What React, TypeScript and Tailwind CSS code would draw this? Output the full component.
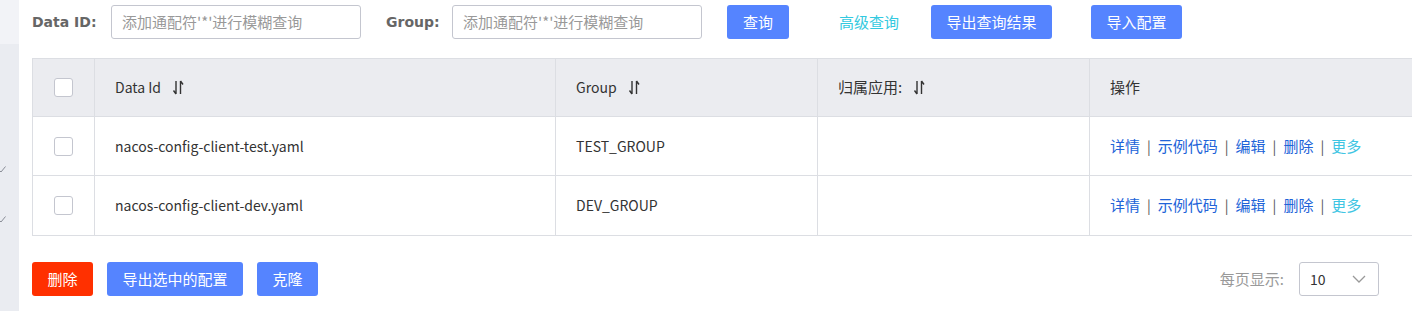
import React from "react";

const font = { fontFamily: '"Noto Sans CJK SC", "Liberation Sans", sans-serif' };
const labelFont = { fontFamily: '"DejaVu Sans", sans-serif' };

function SortIcon() {
  return (
    <svg width="12" height="15" viewBox="0 0 12 15" className="ml-[11px] inline-block" fill="none" stroke="#333" strokeWidth="1.4">
      <path d="M4 1v13M4 14L1.5 10.5" />
      <path d="M8.5 14V1M8.5 1L11 4.5" />
    </svg>
  );
}

function Check() {
  return (
    <svg width="8" height="7" viewBox="0 0 8 7" fill="none" stroke="#8a8d96" strokeWidth="1">
      <path d="M0.5 3.5L3 6L7.5 0.5" />
    </svg>
  );
}

function Checkbox() {
  return <div className="w-[19px] h-[19px] rounded-[3px] border border-[#c4c6cf] bg-white" />;
}

const rows = [
  { id: "nacos-config-client-test.yaml", group: "TEST_GROUP" },
  { id: "nacos-config-client-dev.yaml", group: "DEV_GROUP" },
];

function Actions() {
  const links = ["详情", "示例代码", "编辑", "删除"];
  return (
    <div className="flex items-center text-[15px]">
      {links.map((l) => (
        <React.Fragment key={l}>
          <a href="#" className="text-[#2163d8]">{l}</a>
          <span className="mx-[7px] text-[14px] text-[#555]">|</span>
        </React.Fragment>
      ))}
      <a href="#" className="text-[#3fc5e3]">更多</a>
    </div>
  );
}

export default function App() {
  return (
    <div className="flex w-[1412px] h-[311px] overflow-hidden bg-white text-[#333]" style={font}>
      {/* Sidebar edge */}
      <div className="w-[19px] shrink-0 flex flex-col">
        <div className="h-[44px] bg-[#f2f3f7]" />
        <div className="flex-1 bg-[#eaecf1] flex flex-col gap-[43px] pt-[122px] -ml-[2px]">
          <Check />
          <Check />
        </div>
      </div>

      <div className="flex-1 pl-[13px] min-w-0">
        {/* Search bar */}
        <div className="flex items-center h-[34px] mt-[5px]">
          <span className="font-bold text-[14px] text-[#666] w-[79px]" style={labelFont}>Data ID:</span>
          <div className="w-[250px] h-[34px] border border-[#c4c6cf] rounded-[3px] flex items-center px-[10px] text-[15px] text-[#999]">添加通配符'*'进行模糊查询</div>
          <span className="font-bold text-[14px] text-[#666] ml-[25px] w-[66px]" style={labelFont}>Group:</span>
          <div className="w-[250px] h-[34px] border border-[#c4c6cf] rounded-[3px] flex items-center px-[10px] text-[15px] text-[#999]">添加通配符'*'进行模糊查询</div>
          <button className="ml-[25px] w-[62px] h-[34px] rounded-[3px] bg-[#5584ff] text-white text-[15px]">查询</button>
          <a href="#" className="ml-[50px] text-[15px] text-[#33c9e0]">高级查询</a>
          <button className="ml-[32px] w-[121px] h-[34px] rounded-[3px] bg-[#5584ff] text-white text-[15px]">导出查询结果</button>
          <button className="ml-[39px] w-[91px] h-[34px] rounded-[3px] bg-[#5584ff] text-white text-[15px]">导入配置</button>
        </div>

        {/* Table */}
        <div className="mt-[19px] w-[1420px] border border-[#dcdee3] text-[14px]">
          <div className="grid grid-cols-[62px_461px_262px_272px_1fr] h-[58px] bg-[#ebecf0] border-b border-[#dcdee3]">
            <div className="flex items-center justify-center border-r border-[#dcdee3]"><Checkbox /></div>
            <div className="flex items-center pl-[20px] border-r border-[#dcdee3]">Data Id<SortIcon /></div>
            <div className="flex items-center pl-[20px] border-r border-[#dcdee3]">Group<SortIcon /></div>
            <div className="flex items-center pl-[20px] border-r border-[#dcdee3] text-[15px]">归属应用:<SortIcon /></div>
            <div className="flex items-center pl-[20px] text-[15px]">操作</div>
          </div>
          {rows.map((r, i) => (
            <div key={r.id} className={`grid grid-cols-[62px_461px_262px_272px_1fr] h-[59px] ${i === 0 ? "border-b border-[#dcdee3]" : ""}`}>
              <div className="flex items-center justify-center border-r border-[#dcdee3]"><Checkbox /></div>
              <div className="flex items-center pl-[20px] border-r border-[#dcdee3]">{r.id}</div>
              <div className="flex items-center pl-[20px] border-r border-[#dcdee3]">{r.group}</div>
              <div className="border-r border-[#dcdee3]" />
              <div className="flex items-center pl-[20px]"><Actions /></div>
            </div>
          ))}
        </div>

        {/* Footer */}
        <div className="flex items-center justify-between mt-[26px] pr-[33px]">
          <div className="flex items-center gap-[14px]">
            <button className="w-[61px] h-[34px] rounded-[3px] bg-[#ff3000] text-white text-[15px]">删除</button>
            <button className="w-[136px] h-[34px] rounded-[3px] bg-[#5584ff] text-white text-[15px]">导出选中的配置</button>
            <button className="w-[61px] h-[34px] rounded-[3px] bg-[#5584ff] text-white text-[15px]">克隆</button>
          </div>
          <div className="flex items-center">
            <span className="text-[15px] text-[#999] mr-[15px]">每页显示:</span>
            <div className="w-[80px] h-[34px] border border-[#c4c6cf] rounded-[3px] flex items-center justify-between pl-[10px] pr-[12px] text-[14px] text-[#333]">
              <span>10</span>
              <svg width="14" height="8" viewBox="0 0 14 8" fill="none" stroke="#999" strokeWidth="1.3">
                <path d="M1 1l6 6 6-6" />
              </svg>
            </div>
          </div>
        </div>
      </div>
    </div>
  );
}
